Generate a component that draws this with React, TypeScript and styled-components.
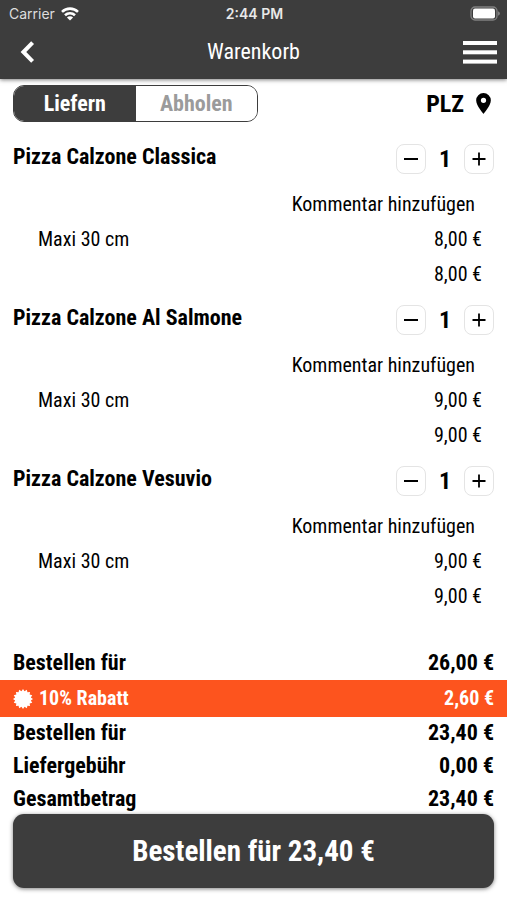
import React from "react";
import styled, { createGlobalStyle } from "styled-components";

const INK = "#3d3d3d";
const FONT = '"Roboto Condensed", "Liberation Sans Narrow", Roboto, sans-serif';

const GlobalStyle = createGlobalStyle`
  *, *::before, *::after { box-sizing: border-box; }
  body { margin: 0; background: #fff; color: #000; font-family: ${FONT}; }
  button { font: inherit; color: inherit; background: none; border: 0; padding: 0; cursor: pointer; }
  h1, h2, dl, dt, dd, ul, p { margin: 0; padding: 0; }
  ul { list-style: none; }
  svg { display: block; }
`;

const Page = styled.div`
  display: flex;
  flex-direction: column;
  min-height: 100vh;
`;

const Header = styled.header`
  background: ${INK};
  color: #fff;
  box-shadow: 0 1px 4px rgba(0, 0, 0, 0.5);
`;

const StatusBar = styled.div`
  display: grid;
  grid-template-columns: 1fr auto 1fr;
  align-items: center;
  height: 27px;
  padding: 0 7px 0 9px;
  font-family: Inter, sans-serif;
  font-size: 14px;
`;

const Carrier = styled.span`
  display: flex;
  align-items: center;
  gap: 6px;
  color: #dedede;
`;

const Clock = styled.time`
  font-weight: 600;
  color: #e8e8e8;
`;

const Battery = styled.span`
  justify-self: end;
`;

const NavBar = styled.nav`
  display: grid;
  grid-template-columns: 1fr auto 1fr;
  align-items: center;
  height: 52px;
  padding: 0 10px 2px;
`;

const Title = styled.h1`
  font-size: 22px;
  font-weight: 400;
  line-height: 28px;
`;

const IconButton = styled.button<{ $end?: boolean }>`
  justify-self: ${(p) => (p.$end ? "end" : "start")};
  padding-left: ${(p) => (p.$end ? 0 : 10)}px;
`;

const Toolbar = styled.div`
  display: flex;
  align-items: center;
  justify-content: space-between;
  padding: 6px 16px 22px 13px;
`;

const Segments = styled.div`
  display: flex;
  width: 245px;
  height: 37px;
  border: 1px solid ${INK};
  border-radius: 11px;
  overflow: hidden;
`;

const Segment = styled.button<{ $active?: boolean }>`
  flex: 1;
  font-size: 22px;
  font-weight: 700;
  color: ${(p) => (p.$active ? "#fff" : "#9b9b9b")};
  background: ${(p) => (p.$active ? INK : "#fff")};
`;

const PostcodeButton = styled.button`
  display: flex;
  align-items: center;
  gap: 12px;
  font-size: 24px;
  font-weight: 700;
`;

const ItemList = styled.ul`
  display: flex;
  flex-direction: column;
  flex: 1;
  gap: 13px;
  padding: 0 13px;
`;

const ItemHead = styled.div`
  display: flex;
  align-items: flex-start;
  justify-content: space-between;
  margin-bottom: 13px;
`;

const ItemName = styled.h2`
  font-size: 22px;
  font-weight: 700;
  line-height: 26px;
`;

const Stepper = styled.div`
  display: flex;
  align-items: center;
`;

const StepButton = styled.button`
  display: grid;
  place-items: center;
  width: 30px;
  height: 30px;
  border: 1px solid #e4e4e4;
  border-radius: 8px;
`;

const Quantity = styled.output`
  width: 38px;
  text-align: center;
  font-size: 24px;
  font-weight: 700;
  line-height: 30px;
`;

const CommentButton = styled.button`
  display: block;
  margin: 0 19px 0 auto;
  font-size: 20px;
  line-height: 35px;
`;

const PriceRow = styled.p`
  display: flex;
  padding: 0 12px 0 25px;
  font-size: 20px;
  line-height: 35px;
`;

const Price = styled.span`
  margin-left: auto;
`;

const Totals = styled.dl`
  display: flex;
  flex-direction: column;
  gap: 3px;
`;

const TotalRow = styled.div`
  display: flex;
  justify-content: space-between;
  padding: 0 13px;
  font-size: 22px;
  font-weight: 700;
  line-height: 30px;
`;

const DiscountRow = styled(TotalRow)`
  margin: -1px 0 -2px;
  background: #fd541e;
  color: #fff;
  font-size: 20px;
  line-height: 37px;
`;

const DiscountLabel = styled.dt`
  display: flex;
  align-items: center;
  gap: 6px;
`;

const OrderButton = styled.button`
  height: 74px;
  margin: 0 13px 12px;
  border-radius: 11px;
  background: ${INK};
  color: #fff;
  font-size: 29px;
  font-weight: 700;
  box-shadow: 0 1px 4px rgba(0, 0, 0, 0.5);
`;

const WifiIcon = () => (
  <svg width="18" height="14" viewBox="0 0 18 14" fill="none" stroke="#fff" strokeWidth="2.6" aria-hidden="true">
    <path d="M1 4.900a11.500 11.500 0 0 1 16 0" />
    <path d="M4 8.300a7.200 7.200 0 0 1 10 0" />
    <path d="M9 13.600 5.900 10.500a4.400 4.400 0 0 1 6.200 0z" fill="#fff" stroke="none" />
  </svg>
);

const BatteryIcon = () => (
  <svg width="30" height="15" viewBox="0 0 30 15" aria-hidden="true">
    <rect x="1" y="1" width="26" height="13" rx="4" fill="none" stroke="#808080" strokeWidth="1.3" />
    <rect x="3" y="2.500" width="22" height="10" rx="2" fill="#fff" />
    <path d="M28 5.200q2 .7 2 2.300t-2 2.300z" fill="#808080" />
  </svg>
);

const BackIcon = () => (
  <svg width="15" height="22" viewBox="0 0 15 22" fill="none" stroke="#fff" strokeWidth="4" aria-hidden="true">
    <path d="M12.600 1.600 3.400 11l9.200 9.400" />
  </svg>
);

const MenuIcon = () => (
  <svg width="34" height="23" viewBox="0 0 34 23" fill="#fff" aria-hidden="true">
    <rect width="34" height="4" />
    <rect y="9.300" width="34" height="4" />
    <rect y="18.600" width="34" height="4" />
  </svg>
);

const PinIcon = () => (
  <svg width="15" height="21" viewBox="0 0 14 20" aria-hidden="true">
    <path fillRule="evenodd" d="M7 0a7 7 0 0 0-7 7c0 5.200 7 13 7 13s7-7.800 7-13a7 7 0 0 0-7-7zm0 4.500a2.500 2.500 0 1 1 0 5 2.500 2.500 0 0 1 0-5z" />
  </svg>
);

const MinusIcon = () => (
  <svg width="14" height="14" viewBox="0 0 14 14" stroke="#000" strokeWidth="2" aria-hidden="true">
    <path d="M0 7h14" />
  </svg>
);

const PlusIcon = () => (
  <svg width="14" height="14" viewBox="0 0 14 14" stroke="#000" strokeWidth="1.800" aria-hidden="true">
    <path d="M0.500 7h13M7 0.500v13" />
  </svg>
);

const burst = Array.from({ length: 32 }, (_, i) => {
  const r = i % 2 ? 8 : 10;
  const a = (i * Math.PI) / 16;
  return `${(10 + r * Math.sin(a)).toFixed(2)},${(10 - r * Math.cos(a)).toFixed(2)}`;
}).join(" ");

const BurstIcon = () => (
  <svg width="20" height="20" viewBox="0 0 20 20" fill="#fff" aria-hidden="true">
    <polygon points={burst} />
  </svg>
);

const items = [
  { name: "Pizza Calzone Classica", option: "Maxi 30 cm", price: "8,00 €" },
  { name: "Pizza Calzone Al Salmone", option: "Maxi 30 cm", price: "9,00 €" },
  { name: "Pizza Calzone Vesuvio", option: "Maxi 30 cm", price: "9,00 €" },
];

const totals = [
  { label: "Bestellen für", value: "23,40 €" },
  { label: "Liefergebühr", value: "0,00 €" },
  { label: "Gesamtbetrag", value: "23,40 €" },
];

export default function App() {
  return (
    <Page>
      <GlobalStyle />
      <Header>
        <StatusBar>
          <Carrier>Carrier <WifiIcon /></Carrier>
          <Clock>2:44 PM</Clock>
          <Battery><BatteryIcon /></Battery>
        </StatusBar>
        <NavBar>
          <IconButton aria-label="Zurück"><BackIcon /></IconButton>
          <Title>Warenkorb</Title>
          <IconButton $end aria-label="Menü"><MenuIcon /></IconButton>
        </NavBar>
      </Header>
      <Toolbar>
        <Segments>
          <Segment $active aria-pressed="true">Liefern</Segment>
          <Segment aria-pressed="false">Abholen</Segment>
        </Segments>
        <PostcodeButton>PLZ <PinIcon /></PostcodeButton>
      </Toolbar>
      <ItemList>
        {items.map((item) => (
          <li key={item.name}>
            <ItemHead>
              <ItemName>{item.name}</ItemName>
              <Stepper>
                <StepButton aria-label="Weniger"><MinusIcon /></StepButton>
                <Quantity>1</Quantity>
                <StepButton aria-label="Mehr"><PlusIcon /></StepButton>
              </Stepper>
            </ItemHead>
            <CommentButton>Kommentar hinzufügen</CommentButton>
            <PriceRow>{item.option}<Price>{item.price}</Price></PriceRow>
            <PriceRow><Price>{item.price}</Price></PriceRow>
          </li>
        ))}
      </ItemList>
      <Totals>
        <TotalRow><dt>Bestellen für</dt><dd>26,00 €</dd></TotalRow>
        <DiscountRow>
          <DiscountLabel><BurstIcon />10% Rabatt</DiscountLabel>
          <dd>2,60 €</dd>
        </DiscountRow>
        {totals.map((row) => (
          <TotalRow key={row.label}><dt>{row.label}</dt><dd>{row.value}</dd></TotalRow>
        ))}
      </Totals>
      <OrderButton>Bestellen für 23,40 €</OrderButton>
    </Page>
  );
}
